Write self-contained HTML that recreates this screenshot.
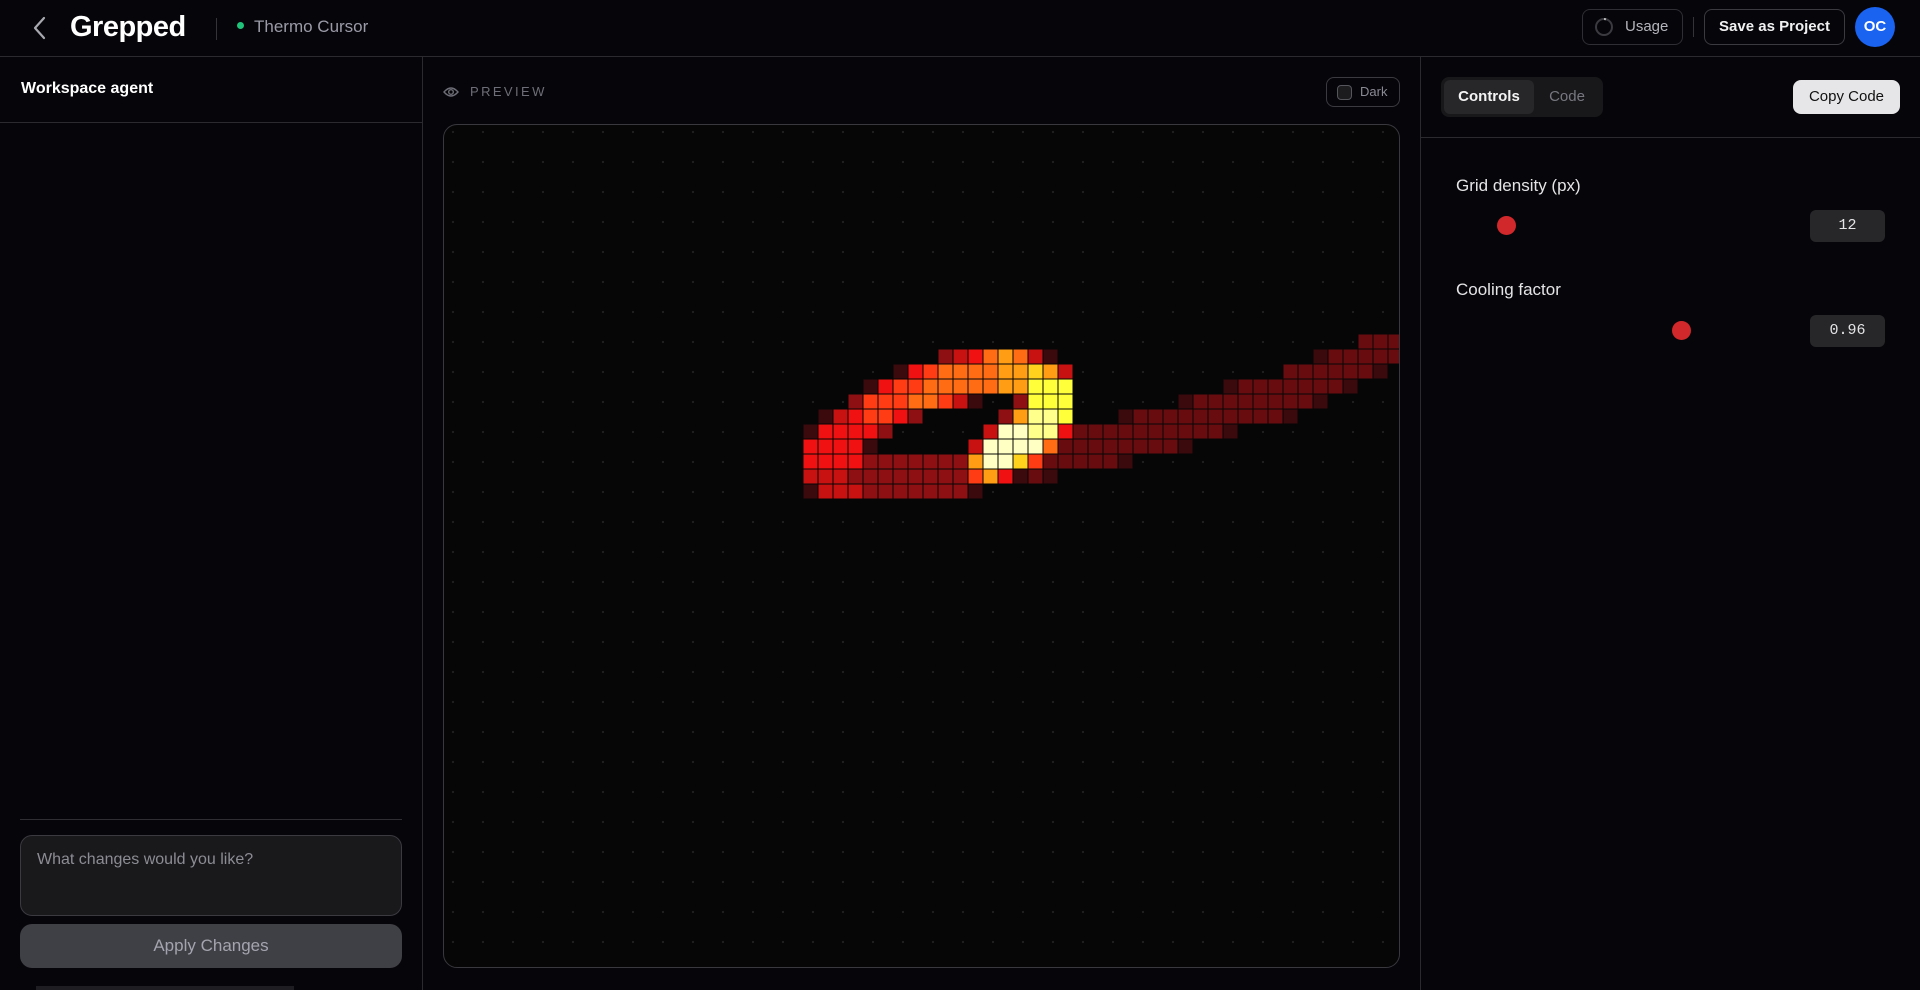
<!DOCTYPE html>
<html><head><meta charset="utf-8"><style>
*{box-sizing:border-box;margin:0;padding:0}
body{width:1920px;height:990px;background:#060509;font-family:"Liberation Sans",sans-serif;color:#fff;position:relative;overflow:hidden}
.abs{position:absolute}
</style></head><body>
<div class="abs" style="left:0;top:0;width:1920px;height:57px;border-bottom:1px solid #2a2a2f"></div>
<svg class="abs" style="left:30px;top:15px" width="20" height="26" viewBox="0 0 20 26"><path d="M14 3 L5 13 L14 23" fill="none" stroke="#a8a8b0" stroke-width="2.2" stroke-linecap="round" stroke-linejoin="round"/></svg>
<div class="abs" style="left:70px;top:11px;font-size:29px;font-weight:bold;letter-spacing:-0.5px">Grepped</div>
<div class="abs" style="left:216px;top:18px;width:1px;height:22px;background:#333338"></div>
<div class="abs" style="left:237px;top:22px;width:7px;height:7px;border-radius:50%;background:#1fc37a"></div>
<div class="abs" style="left:254px;top:17px;font-size:17px;color:#9a9aa8">Thermo Cursor</div>

<div class="abs" style="left:1582px;top:9px;width:101px;height:36px;border:1px solid #2e2e34;border-radius:8px"></div>
<svg class="abs" style="left:1594px;top:17px" width="20" height="20" viewBox="0 0 20 20"><circle cx="10" cy="10" r="8" fill="none" stroke="#3a3a40" stroke-width="2"/><path d="M10 2 A8 8 0 0 1 12 2.3" stroke="#bbb" stroke-width="2" fill="none"/></svg>
<div class="abs" style="left:1625px;top:18px;font-size:15px;color:#b4b4bc">Usage</div>
<div class="abs" style="left:1693px;top:17px;width:1px;height:20px;background:#333338"></div>
<div class="abs" style="left:1704px;top:9px;width:141px;height:36px;border:1px solid #3a3a40;border-radius:8px;font-size:15px;font-weight:bold;color:#f0f0f2;text-align:center;line-height:34px">Save as Project</div>
<div class="abs" style="left:1855px;top:7px;width:40px;height:40px;border-radius:50%;background:#1a62f0;font-size:15px;font-weight:bold;text-align:center;line-height:40px">OC</div>

<div class="abs" style="left:422px;top:57px;width:1px;height:933px;background:#2a2a2f"></div>
<div class="abs" style="left:21px;top:80px;font-size:16px;font-weight:bold">Workspace agent</div>
<div class="abs" style="left:0;top:122px;width:422px;height:1px;background:#2a2a2f"></div>
<div class="abs" style="left:20px;top:819px;width:382px;height:1px;background:#2e2e33"></div>
<div class="abs" style="left:20px;top:835px;width:382px;height:81px;background:#19191c;border:1px solid #3a3a40;border-radius:12px"></div>
<div class="abs" style="left:37px;top:851px;font-size:16px;color:#8c8c94">What changes would you like?</div>
<div class="abs" style="left:20px;top:924px;width:382px;height:44px;background:#3f3f46;border-radius:12px;font-size:17px;color:#a4a4ae;text-align:center;line-height:44px">Apply Changes</div>
<div class="abs" style="left:36px;top:986px;width:258px;height:4px;background:#1e1e22"></div>

<svg class="abs" style="left:443px;top:85px" width="16" height="14" viewBox="0 0 16 14"><path d="M1 7 Q8 -1 15 7 Q8 15 1 7Z" fill="none" stroke="#6e6e78" stroke-width="1.4"/><circle cx="8" cy="7" r="2.3" fill="none" stroke="#6e6e78" stroke-width="1.4"/></svg>
<div class="abs" style="left:470px;top:84px;font-size:13px;letter-spacing:2.4px;color:#6e6e78">PREVIEW</div>
<div class="abs" style="left:1326px;top:77px;width:74px;height:30px;border:1px solid #3a3a40;border-radius:8px"></div>
<div class="abs" style="left:1337px;top:85px;width:15px;height:15px;border:1px solid #55555c;border-radius:4px;background:#1c1c1f"></div>
<div class="abs" style="left:1360px;top:84px;font-size:13px;color:#8a8a95">Dark</div>
<div class="abs" style="left:443px;top:124px;width:957px;height:844px;border:1px solid #38383e;border-radius:14px;background-color:#060606;background-image:radial-gradient(circle,#1f1f1f 1px,transparent 1.3px);background-size:30px 30px;background-position:-6px -8px;overflow:hidden">
<svg id="hm" width="957" height="844" style="position:absolute;left:-1px;top:-1px"></svg>
</div>

<div class="abs" style="left:1420px;top:57px;width:1px;height:933px;background:#2a2a2f"></div>
<div class="abs" style="left:1441px;top:77px;width:162px;height:40px;background:#18181b;border-radius:8px"></div>
<div class="abs" style="left:1444px;top:80px;width:90px;height:34px;background:#27272a;border-radius:6px;font-size:15px;font-weight:bold;text-align:center;line-height:34px;color:#f4f4f5">Controls</div>
<div class="abs" style="left:1534px;top:80px;width:66px;height:34px;font-size:15px;text-align:center;line-height:34px;color:#777780">Code</div>
<div class="abs" style="left:1793px;top:80px;width:107px;height:34px;background:#e6e6e8;border-radius:8px;font-size:15px;text-align:center;line-height:34px;color:#111">Copy Code</div>
<div class="abs" style="left:1421px;top:137px;width:499px;height:1px;background:#2a2a2f"></div>
<div class="abs" style="left:1456px;top:176px;font-size:17px;color:#e4e4e7">Grid density (px)</div>
<div class="abs" style="left:1497px;top:216px;width:19px;height:19px;border-radius:50%;background:#d1282c"></div>
<div class="abs" style="left:1810px;top:210px;width:75px;height:32px;background:#27272a;border-radius:6px;font-family:'Liberation Mono',monospace;font-size:15px;text-align:center;line-height:32px;color:#e4e4e7">12</div>
<div class="abs" style="left:1456px;top:280px;font-size:17px;color:#e4e4e7">Cooling factor</div>
<div class="abs" style="left:1672px;top:321px;width:19px;height:19px;border-radius:50%;background:#d1282c"></div>
<div class="abs" style="left:1810px;top:315px;width:75px;height:32px;background:#27272a;border-radius:6px;font-family:'Liberation Mono',monospace;font-size:15px;text-align:center;line-height:32px;color:#e4e4e7">0.96</div>

<script>
var rows=[
".....................................ddd",
".........mrROaOrk.................kddddd",
"......kRoOOOOaayar..............ddddddk.",
"....kRooOOOOOaaYYY..........kdddddddk...",
"...moooOOork..mYYY.......kddddddddk.....",
".krRooRm.....mappY...kddddddddddk.......",
"kRRRRm......rccppRddddddddddk...........",
"RRRRk......rccccOddddddddk..............",
"RRRRmmmmmmmaccyodddddk..................",
"rrrmmmmmmmmoaRkdk.......................",
"krrrmmmmmmmk............................"];
var col={k:"#3a0a0d",d:"#680c10",m:"#8e1013",r:"#c81212",R:"#f01212",o:"#ff3c14",O:"#ff6c14",a:"#ff9e14",y:"#ffd21e",Y:"#ffff3a",p:"#ffff8c",c:"#ffffc4"};
var s="";
for(var r=0;r<rows.length;r++){for(var c=0;c<rows[r].length;c++){var ch=rows[r][c];if(col[ch]){var x=803-443+15*c,y=334-124+15*r;s+='<rect x="'+(x+0.5)+'" y="'+(y+0.5)+'" width="14" height="14" fill="'+col[ch]+'"/>';}}}
document.getElementById("hm").innerHTML=s;
</script>
</body></html>
